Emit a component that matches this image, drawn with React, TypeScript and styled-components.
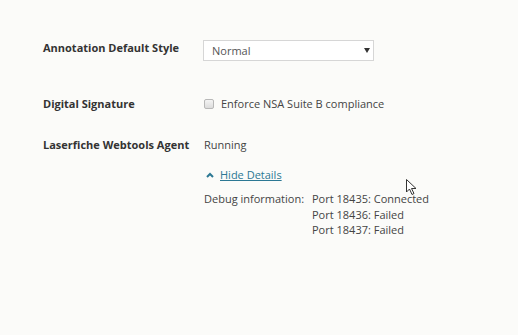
import React from "react";
import styled, { createGlobalStyle } from "styled-components";

const Global = createGlobalStyle`
  html, body { margin: 0; padding: 0; background: #fbfbf9; }
  body { font-family: "Open Sans", "Noto Sans", sans-serif; color: #444; }
`;

const Page = styled.div`
  position: relative;
  width: 518px;
  height: 335px;
  box-sizing: border-box;
  padding: 40px 0 0 43px;
  background: #fbfbf9;
`;

const Row = styled.div<{ $mt?: number }>`
  display: grid;
  grid-template-columns: 160px 1fr;
  align-items: start;
  margin-top: ${(p) => p.$mt ?? 0}px;
`;

const Label = styled.div`
  font-size: 11px;
  font-weight: 700;
  color: #333;
  line-height: 16px;
`;

const Value = styled.div`
  font-size: 11px;
  color: #444;
  line-height: 16px;
  padding-left: 1px;
`;

const Select = styled.div`
  width: 171px;
  height: 21px;
  box-sizing: border-box;
  border: 1px solid #d6d6d6;
  background: #fff;
  display: flex;
  align-items: center;
  justify-content: space-between;
  padding: 0 3px 0 8px;
  font-size: 11px;
  color: #555;
`;

const Caret = styled.span`
  width: 0;
  height: 0;
  border-left: 3px solid transparent;
  border-right: 3px solid transparent;
  border-top: 5px solid #333;
`;

const CheckLine = styled.label`
  display: flex;
  align-items: center;
  gap: 7px;
  margin-left: 1px;
  font-size: 11px;
  color: #444;
  line-height: 16px;
`;

const Box = styled.span`
  width: 10px;
  height: 10px;
  box-sizing: border-box;
  border: 1px solid #b8b8b8;
  border-radius: 2px;
  background: linear-gradient(#f4f4f4, #dcdcdc);
`;

const Details = styled.div`
  margin-top: 8px;
  margin-left: 161px;
`;

const Toggle = styled.a`
  display: inline-flex;
  align-items: center;
  gap: 6px;
  margin-left: 2px;
  font-size: 11px;
  color: #2c7894;
  line-height: 16px;
`;

const ToggleText = styled.span`
  text-decoration: underline;
`;

const Debug = styled.div`
  display: grid;
  grid-template-columns: 108px auto;
  margin-top: 8px;
  font-size: 11px;
  color: #444;
  line-height: 15.5px;
`;

const Cursor = styled.svg`
  position: absolute;
  left: 406px;
  top: 179px;
`;

export default function App() {
  return (
    <>
      <Global />
      <Page>
        <Row>
          <Label>Annotation Default Style</Label>
          <Select>
            <span>Normal</span>
            <Caret />
          </Select>
        </Row>
        <Row $mt={35}>
          <Label>Digital Signature</Label>
          <CheckLine>
            <Box />
            Enforce NSA Suite B compliance
          </CheckLine>
        </Row>
        <Row $mt={25}>
          <Label>Laserfiche Webtools Agent</Label>
          <Value>Running</Value>
        </Row>
        <Details>
          <Toggle>
            <svg width="8" height="6" viewBox="0 0 8 6">
              <path d="M1 5 L4 2 L7 5" stroke="#2c7894" strokeWidth="2" fill="none" />
            </svg>
            <ToggleText>Hide Details</ToggleText>
          </Toggle>
          <Debug>
            <span>Debug information:</span>
            <div>
              <div>Port 18435: Connected</div>
              <div>Port 18436: Failed</div>
              <div>Port 18437: Failed</div>
            </div>
          </Debug>
        </Details>
        <Cursor width="11" height="17" viewBox="0 0 11 17">
          <path d="M0.5 0.5 L0.5 13 L3.5 10 L6 15.5 L8 14.5 L5.5 9.5 L10 9.5 Z" fill="#fff" stroke="#333" strokeWidth="1" />
        </Cursor>
      </Page>
    </>
  );
}
